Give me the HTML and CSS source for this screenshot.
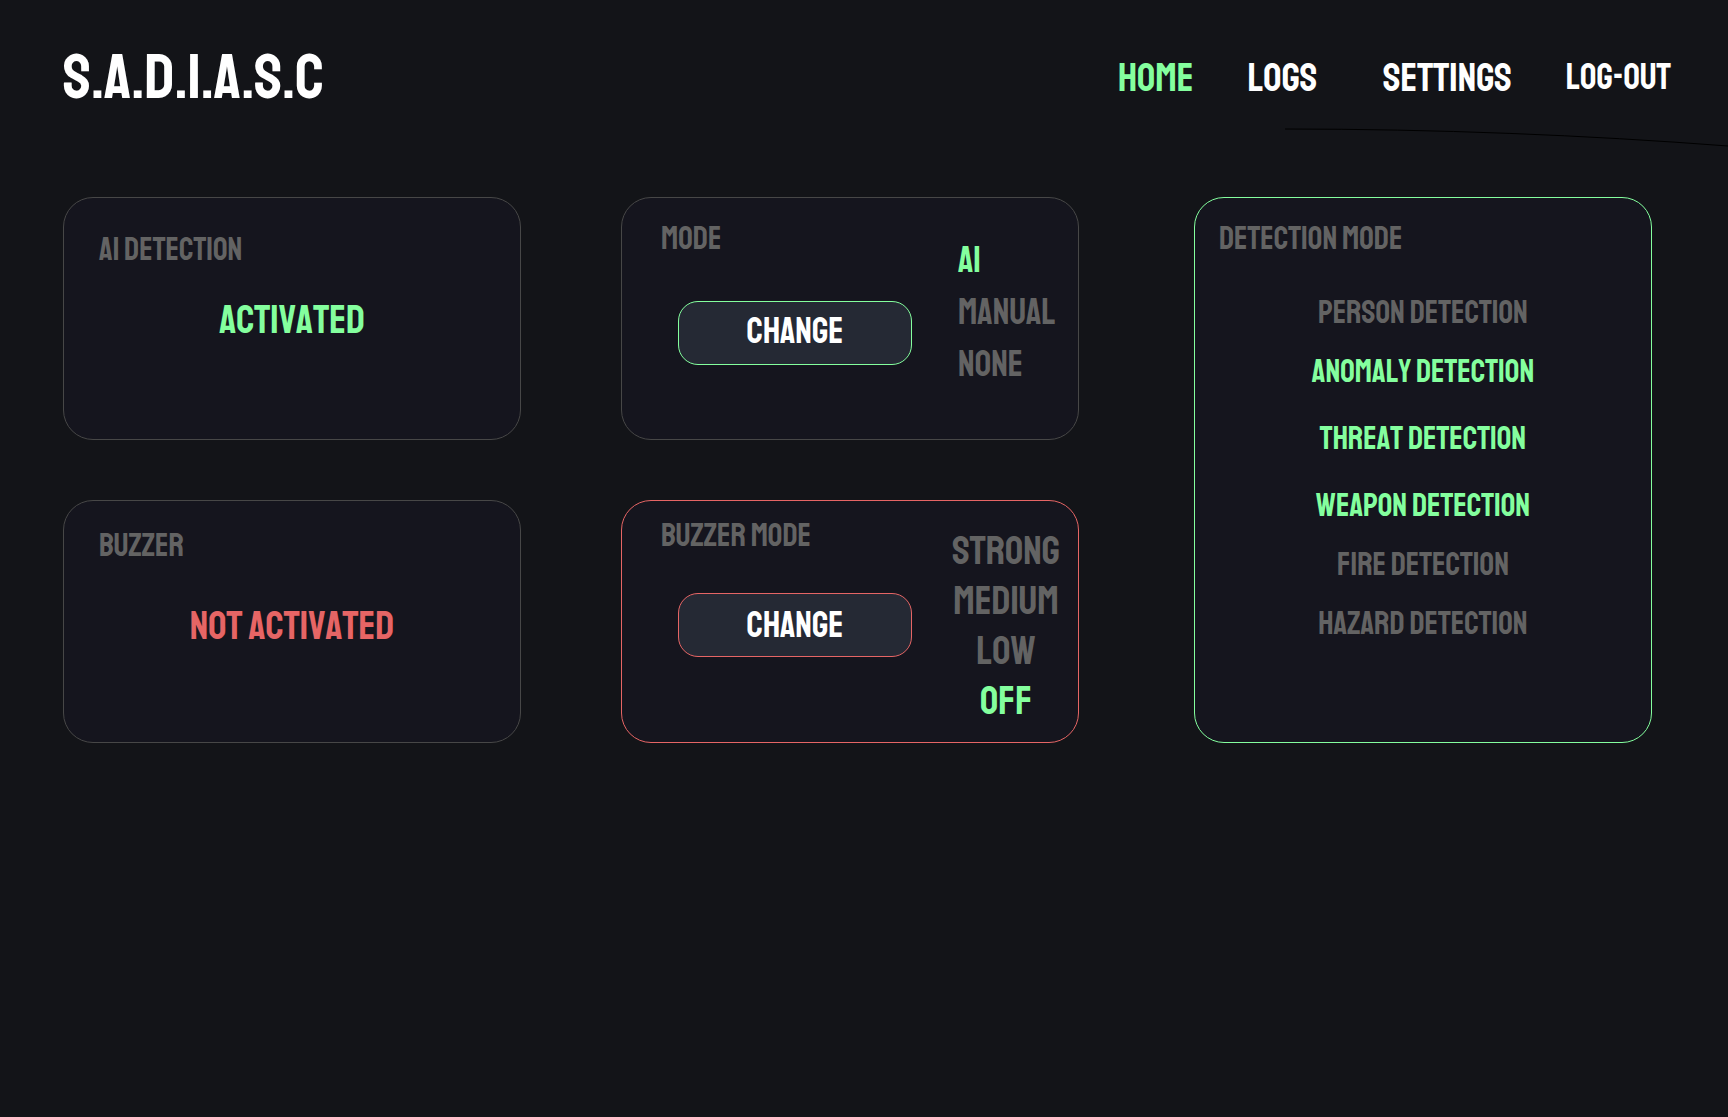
FILE: index.html
```
<!DOCTYPE html>
<html lang="en">
<head>
<meta charset="utf-8">
<meta name="viewport" content="width=device-width, initial-scale=1">
<title>S.A.D.I.A.S.C</title>
<link rel="stylesheet" href="styles.css">
</head>
<body>
<header class="header">
  <h1 class="logo">S.A.D.I.A.S.C</h1>
  <nav class="nav">
    <a class="nav-link current" href="#home">HOME</a>
    <a class="nav-link nav-logs" href="#logs">LOGS</a>
    <a class="nav-link" href="#settings">SETTINGS</a>
    <a class="nav-link logout" href="#logout">LOG-OUT</a>
  </nav>
  <svg class="curve" width="443" height="20" viewBox="0 0 443 20" fill="none" stroke="#000" aria-hidden="true"><path d="M0 1C150 1 300 7 443 18"/></svg>
</header>
<main class="dashboard">
  <div class="controls">
    <section class="card status-card">
      <h2 class="title">AI DETECTION</h2>
      <p class="status on">ACTIVATED</p>
    </section>
    <section class="card mode-card">
      <div class="main-col">
        <h2 class="title">MODE</h2>
        <button class="change" type="button">CHANGE</button>
      </div>
      <ul class="options">
        <li class="on">AI</li>
        <li>MANUAL</li>
        <li>NONE</li>
      </ul>
    </section>
    <section class="card status-card buzzer-card">
      <h2 class="title">BUZZER</h2>
      <p class="status off">NOT ACTIVATED</p>
    </section>
    <section class="card mode-card buzzer-mode">
      <div class="main-col">
        <h2 class="title">BUZZER MODE</h2>
        <button class="change" type="button">CHANGE</button>
      </div>
      <ul class="options">
        <li>STRONG</li>
        <li>MEDIUM</li>
        <li>LOW</li>
        <li class="on">OFF</li>
      </ul>
    </section>
  </div>
  <section class="card detection-card">
    <h2 class="title">DETECTION MODE</h2>
    <ul class="detections">
      <li>PERSON DETECTION</li>
      <li class="on">ANOMALY DETECTION</li>
      <li class="on">THREAT DETECTION</li>
      <li class="on">WEAPON DETECTION</li>
      <li>FIRE DETECTION</li>
      <li>HAZARD DETECTION</li>
    </ul>
  </section>
</main>
</body>
</html>
```
FILE: styles.css
```
:root {
  --green: #84ff9e;
  --red: #e66565;
  --grey: #636363;
  --line: #474747;
}

* {
  box-sizing: border-box;
}

body {
  margin: 0;
  min-height: 100vh;
  background: #131418;
  color: #fff;
  font-family: Staatliches, "Roboto Condensed", "Liberation Sans", sans-serif;
  font-size: 32px;
  font-kerning: none;
  line-height: 40px;
}

h1, h2, p, ul {
  margin: 0;
  padding: 0;
  font-weight: 400;
  font-size: inherit;
  list-style: none;
}

.header {
  position: relative;
  display: flex;
  align-items: center;
  justify-content: space-between;
  padding: 45px 57px 0 63px;
}

.logo {
  font-size: 64px;
  line-height: 64px;
}

.nav {
  display: flex;
  align-items: center;
  gap: 54px;
  padding-top: 2px;
  font-size: 40px;
}

.nav-link {
  color: #fff;
  text-decoration: none;
}

.nav-logs {
  padding-right: 12px;
}

.nav .current,
.on {
  color: var(--green);
}

.off {
  color: var(--red);
}

.logout {
  font-size: 36px;
}

.curve {
  position: absolute;
  top: 128px;
  right: 0;
}

.dashboard {
  display: grid;
  grid-template-columns: 1016fr 458fr;
  gap: 115px;
  padding: 88px 76px 60px 63px;
}

.controls {
  display: grid;
  grid-template-columns: 1fr 1fr;
  gap: 60px 100px;
}

.card {
  min-height: 243px;
  background: #15151e;
  border: 1px solid var(--line);
  border-radius: 30px;
}

.title {
  color: var(--grey);
}

.status-card {
  padding-top: 32px;
}

.status-card .title {
  padding-left: 35px;
}

.status {
  padding-top: 30px;
  text-align: center;
  font-size: 40px;
}

.buzzer-card {
  padding-top: 25px;
}

.buzzer-card .status {
  padding-top: 40px;
}

.mode-card {
  display: flex;
}

.main-col {
  flex: 1;
  padding: 21px 0 0 39px;
}

.change {
  display: block;
  width: 234px;
  height: 64px;
  margin: 42px 0 0 17px;
  padding: 0 0 2px;
  background: #252934;
  border: 1px solid var(--green);
  border-radius: 20px;
  color: #fff;
  font: inherit;
  font-size: 36px;
  font-kerning: none;
  cursor: pointer;
}

.options {
  width: 146px;
  padding: 37px 0 0 26px;
  color: var(--grey);
  font-size: 36px;
  line-height: 52px;
}

.options .on,
.detections .on {
  color: var(--green);
}

.buzzer-mode,
.buzzer-mode .change {
  border-color: var(--red);
}

.buzzer-mode .main-col {
  padding-top: 15px;
}

.buzzer-mode .change {
  margin-top: 37px;
  padding: 2px 0 0;
}

.buzzer-mode .options {
  padding: 25px 0 0 2px;
  text-align: center;
  font-size: 40px;
  line-height: 50px;
}

.detection-card {
  padding-top: 21px;
  border-color: var(--green);
}

.detection-card .title {
  padding-left: 24px;
}

.detections {
  padding-top: 25px;
  color: var(--grey);
  text-align: center;
  line-height: 59px;
}

.detections .on + .on {
  margin-top: 8px;
}
```
